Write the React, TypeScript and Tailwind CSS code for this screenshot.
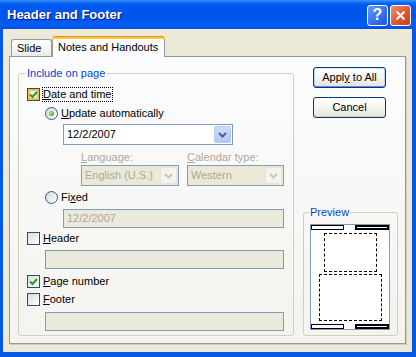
import type { ReactNode } from "react";

const font = "font-['Liberation_Sans',Arial,sans-serif]";

function U({ children }: { children: ReactNode }) {
  return <span className="underline underline-offset-[1px]">{children}</span>;
}

function Tick() {
  return (
    <svg viewBox="0 0 11 11" className="h-[11px] w-[11px]">
      <path d="M2 5.5 L4.5 8 L9 3" fill="none" stroke="#21A121" strokeWidth="2" />
    </svg>
  );
}

function Checkbox({ checked, hot }: { checked?: boolean; hot?: boolean }) {
  return (
    <span
      className={`flex h-[13px] w-[13px] shrink-0 items-center justify-center border border-[#1C5180] ${
        hot
          ? "bg-[#FEF4DA] shadow-[inset_0_0_0_2px_#F9BC4C]"
          : "bg-gradient-to-br from-[#DCDCD7] to-white"
      }`}
    >
      {checked && <Tick />}
    </span>
  );
}

function Radio({ checked }: { checked?: boolean }) {
  return (
    <span className="flex h-[13px] w-[13px] shrink-0 items-center justify-center rounded-full border border-[#2C5E8E] bg-gradient-to-br from-[#D6D6D0] to-white">
      {checked && (
        <span className="h-[5px] w-[5px] rounded-full bg-[radial-gradient(circle_at_35%_35%,#9BEB98,#21A121)]" />
      )}
    </span>
  );
}

function Chevron({ color }: { color: string }) {
  return (
    <svg viewBox="0 0 9 6" className="h-[6px] w-[9px]">
      <path d="M1 1 L4.5 4.5 L8 1" fill="none" stroke={color} strokeWidth="2" />
    </svg>
  );
}

function Combo({
  value,
  disabled,
  className,
}: {
  value: string;
  disabled?: boolean;
  className: string;
}) {
  return (
    <div
      className={`flex h-[21px] items-center border border-[#7F9DB9] p-[1px] ${
        disabled ? "bg-[#EBE8D7] text-[#ACA899]" : "bg-white text-black"
      } ${className}`}
    >
      <span className="flex-1 pl-[2px]">{value}</span>
      <span
        className={`flex h-full w-[17px] items-center justify-center rounded-[2px] border ${
          disabled
            ? "border-[#E6E4DA] bg-[#F4F3EE]"
            : "border-[#B4C9F7] bg-gradient-to-b from-[#CEDCFD] to-[#B1C6F7]"
        }`}
      >
        <Chevron color={disabled ? "#C9C7BA" : "#4D6185"} />
      </span>
    </div>
  );
}

function Field({ value, className }: { value?: string; className: string }) {
  return (
    <div
      className={`flex h-[19px] items-center border border-[#7F9DB9] bg-[#EBE9DB] pl-[3px] text-[#ACA899] ${className}`}
    >
      {value}
    </div>
  );
}

function Bar({ dark }: { dark?: boolean }) {
  if (dark) {
    return (
      <div className="h-[5px] w-[34px] bg-black px-[2px] py-[2px]">
        <div className="h-[1px] bg-white" />
      </div>
    );
  }
  return <div className="h-[5px] w-[33px] border border-black bg-white" />;
}

function XpButton({ children, primary }: { children: ReactNode; primary?: boolean }) {
  return (
    <div
      className={`flex h-[21px] w-[73px] items-center justify-center rounded-[3px] border border-[#003C74] bg-gradient-to-b from-white via-[#F6F5F1] to-[#E5E2D8] ${
        primary
          ? "shadow-[inset_0_1px_0_#CEE7FF,inset_0_-1px_0_#6982EE,inset_1px_0_0_#B8D2F8,inset_-1px_0_0_#B8D2F8]"
          : "shadow-[inset_0_-1px_0_#D6D0C5]"
      }`}
    >
      {children}
    </div>
  );
}

export default function App() {
  return (
    <div className={`flex h-[357px] w-[416px] flex-col bg-[#0858E6] text-[11px] leading-[13px] text-black ${font}`}>
      {/* title bar */}
      <div className="flex h-[29px] shrink-0 items-center bg-[linear-gradient(to_bottom,#3D95FF_0px,#0A64F4_3px,#0058EE_6px,#0055EA_18px,#005EF5_25px,#0050E0_29px)] pl-[7px] pr-[5px]">
        <span className="flex-1 text-[13px] font-bold text-white [text-shadow:1px_1px_0_#0A1883]">
          Header and Footer
        </span>
        <div className="mt-[1px] flex gap-[2px]">
          <div className="flex h-[21px] w-[21px] items-center justify-center rounded-[3px] border border-white bg-gradient-to-br from-[#6A9BF8] via-[#3C75EE] to-[#1E55D6] text-[16px] font-bold leading-none text-white">
            ?
          </div>
          <div className="flex h-[21px] w-[21px] items-center justify-center rounded-[3px] border border-white bg-gradient-to-br from-[#F0906E] via-[#E25A33] to-[#C6401C]">
            <svg viewBox="0 0 11 11" className="h-[11px] w-[11px]">
              <path d="M1.5 1.5 L9.5 9.5 M9.5 1.5 L1.5 9.5" stroke="white" strokeWidth="2" />
            </svg>
          </div>
        </div>
      </div>

      {/* frame + client */}
      <div className="flex flex-1 flex-col pb-[5px] pl-[3px] pr-[4px]">
        <div className="flex flex-1 flex-col bg-[#ECE9D8] pb-[8px] pl-[6px] pr-[6px] pt-[7px]">
          {/* tabs */}
          <div className="relative z-10 flex h-[20px] items-end pl-[2px]">
            <div className="flex h-[17px] w-[41px] items-center rounded-t-[3px] border border-b-0 border-[#919B9C] bg-gradient-to-b from-white to-[#ECEBE6] pl-[5px]">
              Slide
            </div>
            <div className="-mb-[1px] flex h-[21px] w-[113px] flex-col overflow-hidden rounded-t-[3px] bg-[#FCFCFE]">
              <div className="h-[1px] shrink-0 bg-[#E68B2C]" />
              <div className="h-[2px] shrink-0 bg-[#FFC73C]" />
              <div className="flex flex-1 items-center border-x border-[#919B9C] pb-[2px] pl-[5px]">
                Notes and Handouts
              </div>
            </div>
          </div>

          {/* panel */}
          <div className="flex flex-1 border border-[#919B9C] bg-gradient-to-b from-[#FCFCFE] to-[#F4F3EE] pb-[7px] pl-[8px] pr-[7px] pt-[10px] shadow-[1px_1px_0_#D0CDBF]">
            <fieldset className="w-[276px] rounded-[3px] border border-[#D0D0BF]">
              <legend className="ml-[6px] px-[2px] text-[#0046D5]">Include on page</legend>
              <div className="flex flex-col pl-[8px]">
                <div className="mt-[7px] flex h-[14px] items-center">
                  <Checkbox checked hot />
                  <span className="ml-[2px] border border-dotted border-black">
                    <U>D</U>ate and time
                  </span>
                </div>
                <div className="ml-[18px] mt-[6px] flex h-[13px] items-center">
                  <Radio checked />
                  <span className="ml-[3px]">
                    <U>U</U>pdate automatically
                  </span>
                </div>
                <Combo value="12/2/2007" className="ml-[36px] mt-[4px] w-[170px]" />
                <div className="ml-[54px] mt-[6px] flex h-[13px] items-center text-[#ACA899]">
                  <span className="w-[106px]">
                    <U>L</U>anguage:
                  </span>
                  <span>
                    <U>C</U>alendar type:
                  </span>
                </div>
                <div className="ml-[54px] mt-[1px] flex gap-[8px]">
                  <Combo value="English (U.S.)" disabled className="w-[98px]" />
                  <Combo value="Western" disabled className="w-[97px]" />
                </div>
                <div className="ml-[18px] mt-[5px] flex h-[13px] items-center">
                  <Radio />
                  <span className="ml-[3px]">
                    Fi<U>x</U>ed
                  </span>
                </div>
                <Field value="12/2/2007" className="ml-[36px] mt-[5px] w-[221px]" />
                <div className="mt-[4px] flex h-[13px] items-center">
                  <Checkbox />
                  <span className="ml-[3px]">
                    <U>H</U>eader
                  </span>
                </div>
                <Field className="ml-[18px] mt-[5px] w-[239px]" />
                <div className="mt-[6px] flex h-[13px] items-center">
                  <Checkbox checked />
                  <span className="ml-[3px]">
                    <U>P</U>age number
                  </span>
                </div>
                <div className="mt-[5px] flex h-[13px] items-center">
                  <Checkbox />
                  <span className="ml-[3px]">
                    <U>F</U>ooter
                  </span>
                </div>
                <Field className="ml-[18px] mt-[6px] w-[239px]" />
              </div>
            </fieldset>

            <div className="ml-[9px] flex w-[95px] flex-col">
              <div className="ml-[10px] flex flex-col gap-[9px]">
                <XpButton primary>
                  <span>
                    Appl<U>y</U> to All
                  </span>
                </XpButton>
                <XpButton>Cancel</XpButton>
              </div>

              <fieldset className="mt-auto rounded-[3px] border border-[#D0D0BF]">
                <legend className="ml-[5px] px-[1px] text-[#0046D5]">Preview</legend>
                <div className="pb-[5px] pl-[6px] pt-[5px]">
                  <div className="flex h-[106px] w-[80px] flex-col border border-[#7F9DB9] bg-white">
                    <div className="flex justify-between">
                      <Bar />
                      <Bar dark />
                    </div>
                    <div className="ml-[13px] mt-[3px] h-[39px] w-[53px] border border-dashed border-black" />
                    <div className="ml-[8px] mt-[2px] h-[47px] w-[63px] border border-dashed border-black" />
                    <div className="mt-auto flex justify-between">
                      <Bar />
                      <Bar dark />
                    </div>
                  </div>
                </div>
              </fieldset>
            </div>
          </div>
        </div>
      </div>
    </div>
  );
}
